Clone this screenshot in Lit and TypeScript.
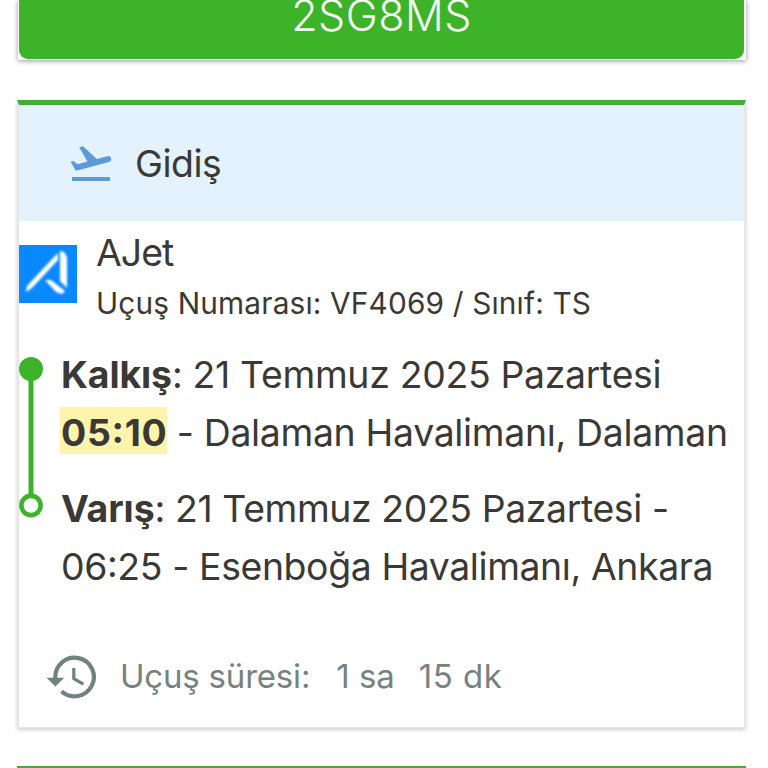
import { LitElement, html, css } from 'lit';
import { customElement } from 'lit/decorators.js';

@customElement('app-root')
class AppRoot extends LitElement {
  static styles = css`
    :host {
      display: block;
      box-sizing: border-box;
      height: 768px;
      padding: 0 22px 0 17px;
      overflow: hidden;
      background: #fff;
      color: #3a3935;
      font-family: Inter, "Liberation Sans", sans-serif;
      font-size: 37.4px;
      letter-spacing: -0.32px;
      line-height: 57.6px;
      white-space: nowrap;
    }
    .pnr {
      height: 60px;
      margin: 0 0 40px 1px;
      padding: 0 2px 0 1px;
      box-sizing: border-box;
      box-shadow: 0 1px 5px rgba(0, 0, 0, 0.42);
    }
    .pnr-code {
      display: flex;
      justify-content: center;
      align-items: flex-end;
      height: 59px;
      padding-bottom: 14px;
      box-sizing: border-box;
      border-radius: 0 0 9px 9px;
      background: #3cb328;
      color: #f4fbf2;
      font-size: 43px;
      font-weight: 350;
      letter-spacing: 0.5px;
    }
    .card {
      height: 628px;
      box-sizing: border-box;
      border: 2px solid #e6e6e6;
      border-top: 5px solid #42ae35;
      border-bottom-width: 1px;
      box-shadow: 0 2px 4px rgba(0, 0, 0, 0.18);
    }
    .direction {
      display: flex;
      align-items: center;
      gap: 20px;
      height: 116px;
      padding-left: 48px;
      background: #e4f2fe;
    }
    .title {
      padding-top: 2px;
      letter-spacing: -0.45px;
    }
    .airline {
      display: flex;
      gap: 19px;
      height: 105px;
      padding-top: 3px;
    }
    .logo {
      display: block;
      margin-top: 21px;
    }
    .name {
      letter-spacing: -1px;
    }
    .flight-no {
      font-size: 29.8px;
      letter-spacing: 0.16px;
      line-height: 43px;
    }
    .stops {
      display: flex;
      gap: 18px;
      height: 250px;
      margin-top: 16px;
    }
    .stop {
      padding-top: 1px;
    }
    .stop + .stop {
      margin-top: 18px;
    }
    b {
      font-weight: 700;
      letter-spacing: -0.1px;
    }
    mark {
      display: inline-block;
      height: 47px;
      margin: 0 -1px 0 -1px;
      padding-left: 1px;
      line-height: 49px;
      vertical-align: 1px;
      background: #fdf4ae;
      color: inherit;
    }
    mark b {
      position: relative;
      top: 1px;
      letter-spacing: 0.7px;
    }
    .colon {
      position: relative;
      top: -3px;
    }
    .arrival {
      letter-spacing: -0.4px;
    }
    .duration {
      display: flex;
      align-items: center;
      margin-top: 53px;
      padding-left: 27px;
      color: #77827f;
      font-size: 33px;
    }
    .duration .label {
      margin: 0 26px 0 22px;
      letter-spacing: -0.2px;
    }
    .duration .hours {
      margin-right: 24px;
      letter-spacing: 0;
    }
    .duration .minutes {
      letter-spacing: 0.5px;
    }
    .next {
      height: 60px;
      margin-top: 38px;
      border-top: 5px solid #42ae35;
    }
    svg {
      flex: none;
    }
  `;

  render() {
    return html`
      <div class="pnr"><div class="pnr-code">2SG8MS</div></div>
      <div class="card">
        <div class="direction">
          <svg width="48" height="48" viewBox="0 0 24 24" fill="#5a9bd8">
            <path d="M2.5 19h19v2h-19zm19.57-9.36c-.21-.8-1.04-1.28-1.84-1.06L14.92 10l-6.9-6.43-1.93.51 4.14 7.17-4.97 1.33-1.97-1.54-1.45.39 1.82 3.16.77 1.33 1.6-.43 5.31-1.42 4.35-1.16L21 11.49c.81-.23 1.28-1.05 1.07-1.85z"/>
          </svg>
          <span class="title">Gidiş</span>
        </div>
        <div class="airline">
          ${this._logo()}
          <div>
            <div class="name">AJet</div>
            <div class="flight-no">Uçuş Numarası: VF4069 / Sınıf: TS</div>
          </div>
        </div>
        <div class="stops">
          <svg width="24" height="192" viewBox="0 0 24 192">
            <path d="M12 24V149" stroke="#3cb328" stroke-width="5"/>
            <circle cx="12" cy="24" r="12" fill="#3cb328"/>
            <circle cx="12" cy="160.5" r="9.6" fill="#fff" stroke="#3cb328" stroke-width="4.6"/>
          </svg>
          <div>
            <div class="stop">
              <div><b>Kalkış</b>: 21 Temmuz 2025 Pazartesi</div>
              <div><mark><b>05<span class="colon">:</span>10</b></mark> - Dalaman Havalimanı, Dalaman</div>
            </div>
            <div class="stop arrival">
              <div><b>Varış</b>: 21 Temmuz 2025 Pazartesi -</div>
              <div>06<span class="colon">:</span>25 - Esenboğa Havalimanı, Ankara</div>
            </div>
          </div>
        </div>
        <div class="duration">
          <svg width="52" height="46" viewBox="0 0 52 46" fill="none" stroke="#6f8280">
            <path d="M9.3 24A19.3 19.3 0 1 1 15.5 37.2" stroke-width="4.2"/>
            <path d="M27.8 14V24.6L37.3 30.2" stroke-width="3.2"/>
            <path d="M0.5 23.7H18.2L9.4 32.5z" fill="#6f8280" stroke="none"/>
          </svg>
          <span class="label">Uçuş süresi:</span>
          <span class="hours">1 sa</span>
          <span class="minutes">15 dk</span>
        </div>
      </div>
      <div class="next"></div>
    `;
  }

  _logo() {
    return html`
      <svg class="logo" width="58" height="58" viewBox="0 0 58 58">
        <defs>
          <filter id="soft"><feGaussianBlur stdDeviation="0.9"/></filter>
        </defs>
        <rect width="58" height="58" fill="#0a88ff"/>
        <g fill="#fff" filter="url(#soft)">
          <path d="M7 47L8 41 34 13 39 8 39 15 13 43z"/>
          <path d="M41 6L45 7 48 12 48 43 41 36z"/>
          <path d="M26 35L32 35 46 46 43 49 37 47z"/>
        </g>
      </svg>
    `;
  }
}
